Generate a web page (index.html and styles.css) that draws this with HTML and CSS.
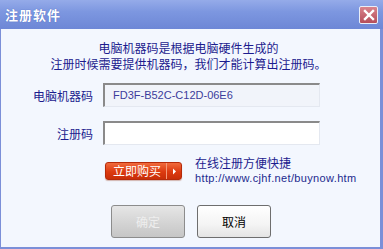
FILE: index.html
```html
<!DOCTYPE html>
<html>
<head>
<meta charset="utf-8">
<link rel="stylesheet" href="styles.css">
</head>
<body>
<div class="window">
  <div class="titlebar">
    <span class="title">注册软件</span>
    <span class="close">
      <svg width="12" height="12" viewBox="0 0 12 12"><path d="M2 2 L10 10 M10 2 L2 10" stroke="#fff" stroke-width="2.4" stroke-linecap="square"/></svg>
    </span>
  </div>
  <div class="content">
    <div class="intro">
      <div class="intro-line">电脑机器码是根据电脑硬件生成的</div>
      <div class="intro-line">注册时候需要提供机器码，我们才能计算出注册码。</div>
    </div>
    <div class="row first">
      <span class="label">电脑机器码</span>
      <span class="field readonly">FD3F-B52C-C12D-06E6</span>
    </div>
    <div class="row second">
      <span class="label">注册码</span>
      <span class="field"></span>
    </div>
    <div class="buy">
      <span class="buy-btn"><span class="buy-text">立即购买</span><span class="buy-arrow"><svg width="5" height="7" viewBox="0 0 5 7"><path d="M1 0.5 L4 3.5 L1 6.5 Z" fill="#fff"/></svg></span></span>
      <div class="buy-info">
        <div class="buy-title">在线注册方便快捷</div>
        <div class="buy-link">http://www.cjhf.net/buynow.htm</div>
      </div>
    </div>
    <div class="actions">
      <span class="btn disabled">确定</span>
      <span class="btn">取消</span>
    </div>
  </div>
</div>
</body>
</html>
```
FILE: styles.css
```css
html, body { margin: 0; padding: 0; }
body { width: 383px; height: 249px; overflow: hidden; background: #f3f7fe; }
.window {
  width: 383px; height: 249px; box-sizing: border-box;
  display: flex; flex-direction: column;
  border-left: 1px solid #7b8fd8; border-right: 3px solid #7b8fd8; border-bottom: 2px solid #7b8fd8;
  background: #f3f7fe;
  font-family: "Noto Sans CJK SC", "Liberation Sans", sans-serif;
}
.titlebar {
  height: 29px; flex: none;
  display: flex; align-items: center; justify-content: space-between;
  background: linear-gradient(#95abe9 0%, #7d97e0 40%, #6d87d6 100%);
  margin-left: -1px; margin-right: -3px;
  padding: 0 5px 0 5px;
}
.title { color: #fff; font-weight: bold; font-size: 13px; letter-spacing: 1px; text-shadow: 0 0 1px #3d5cb5; }
.close {
  width: 19px; height: 18px; box-sizing: border-box;
  display: flex; align-items: center; justify-content: center;
  background: linear-gradient(#d9838c, #b54e5a);
  border: 1px solid #e8eef8; border-radius: 2px;
}
.content { flex: 1; display: flex; flex-direction: column; }
.intro {
  margin: 11px 0 0; text-align: center; color: #1c1c8e;
  font-size: 12px; padding-right: 4px;
}
.intro-line { line-height: 16px; }
.row { display: flex; align-items: center; }
.row.first { margin-top: 11px; }
.row.second { margin-top: 14px; }
.label { width: 92px; text-align: right; color: #1c1c8e; font-size: 12px; margin-right: 10px; }
.field {
  width: 217px; height: 24px; box-sizing: border-box;
  border-top: 2px solid #8a8a8a; border-left: 2px solid #8a8a8a;
  border-right: 1px solid #e4e8f0; border-bottom: 1px solid #e4e8f0;
  background: #fff;
  font-family: "Liberation Sans", Tahoma, sans-serif; font-size: 11px; color: #3c3c9c;
  padding: 2px 0 0 8px; line-height: 16px;
}
.field.readonly { background: #f1f4fa; }
.buy { display: flex; margin-top: 11px; padding-left: 104px; }
.buy-btn {
  display: flex; height: 18px; margin-top: 6px; box-sizing: border-box;
  border-radius: 3px; background: linear-gradient(#f06a3c, #dc3a10 55%, #c82e08);
  border: 1px solid #b52a0a; color: #fff; font-size: 12px; line-height: 16px;
  box-shadow: 0 1px 1px rgba(150,60,30,0.35);
}
.buy-text { padding: 0 5px 0 7px; border-right: 1px solid #f49a7a; }
.buy-arrow { width: 14px; display: flex; align-items: center; justify-content: center; }
.buy-info { margin-left: 13px; }
.buy-title { color: #1c1c8e; font-size: 12px; line-height: 14px; }
.buy-link { color: #1c2a8e; font-family: "Liberation Sans", Tahoma, sans-serif; font-size: 11px; letter-spacing: 0.35px; line-height: 14px; margin-top: 1px; }
.actions { display: flex; gap: 12px; margin-top: 20px; padding-left: 110px; }
.btn {
  width: 74px; height: 33px; box-sizing: border-box;
  display: flex; align-items: center; justify-content: center;
  border: 1px solid #6e6e6e; border-radius: 3px;
  background: linear-gradient(#ffffff, #f4f4f4 60%, #e4e4e4);
  font-size: 12px; color: #000;
}
.btn.disabled {
  border-color: #8c8c8c; color: #eeeeee;
  background: linear-gradient(#e6e6e6, #d2d2d2 60%, #c6c6c6);
}
```
